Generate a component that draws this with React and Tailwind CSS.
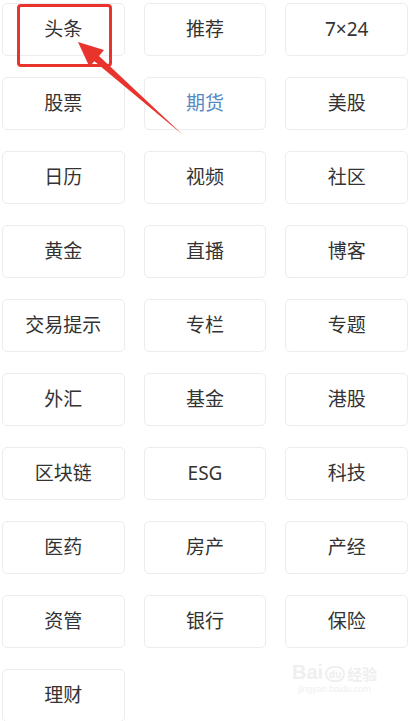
const ROWS = [
  ["头条", "推荐", "7×24"],
  ["股票", "期货", "美股"],
  ["日历", "视频", "社区"],
  ["黄金", "直播", "博客"],
  ["交易提示", "专栏", "专题"],
  ["外汇", "基金", "港股"],
  ["区块链", "ESG", "科技"],
  ["医药", "房产", "产经"],
  ["资管", "银行", "保险"],
  ["理财"],
];

function Tab({ label }) {
  const active = label === "期货";
  return (
    <div
      className={`h-[53px] flex items-center justify-center rounded-[5px] border border-[#ececec] bg-white text-[19px] ${
        active ? "text-[#5389c6]" : "text-[#333333]"
      }`}
    >
      {label}
    </div>
  );
}

export default function App() {
  return (
    <div
      className="relative w-[410px] h-[721px] overflow-hidden bg-white"
      style={{ fontFamily: '"Noto Sans", "Noto Sans CJK SC", sans-serif' }}
    >
      <div className="grid grid-cols-3 gap-x-[19px] gap-y-[21px] px-[2px] pt-[3px]">
        {ROWS.flat().map((label) => (
          <Tab key={label} label={label} />
        ))}
      </div>

      {/* annotation: red box + arrow */}
      <div className="absolute left-[17px] top-[4px] w-[95px] h-[63px] rounded-[4px] border-[3px] border-[#e8342c]" />
      <svg className="absolute inset-0 pointer-events-none" width="410" height="721">
        <polygon
          points="78,42 104,50 99,56 183,135 94.4,61.2 89.4,66.8"
          fill="#e8342c"
        />
      </svg>

      {/* watermark */}
      <div className="absolute left-[292px] top-[662px] flex flex-col items-center text-[#efefef] leading-none">
        <div className="flex items-end gap-[2px]">
          <span className="text-[20px] font-bold" style={{ fontFamily: '"Liberation Sans", sans-serif' }}>Bai</span>
          <span className="w-[20px] h-[16px] rounded-full border-2 border-[#efefef] text-[10px] font-bold flex items-center justify-center">du</span>
          <span className="text-[15px] font-bold">经验</span>
        </div>
        <span className="text-[9px] mt-[3px]" style={{ fontFamily: '"Liberation Sans", sans-serif' }}>jingyan.baidu.com</span>
      </div>
    </div>
  );
}
